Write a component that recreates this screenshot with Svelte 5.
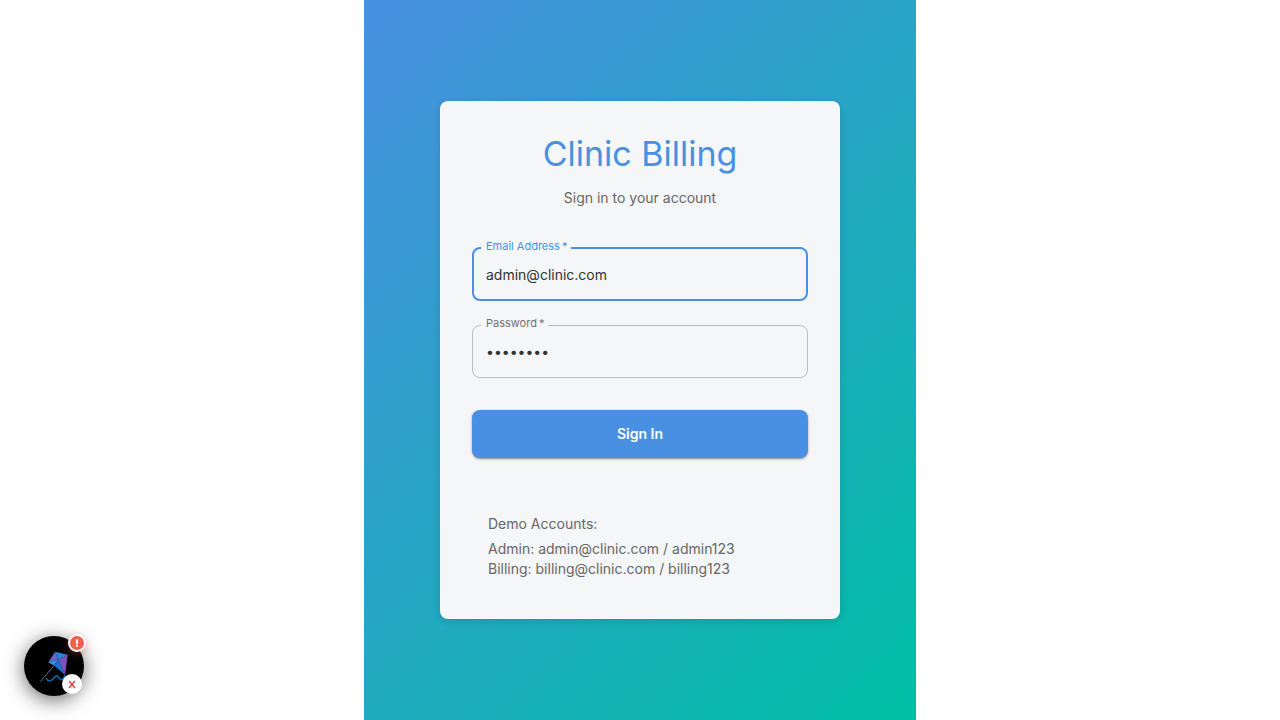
<script>
  let email = $state('admin@clinic.com');
  let password = $state('admin123');
</script>

<main>
  <section class="card">
    <header>
      <h1>Clinic Billing</h1>
      <p>Sign in to your account</p>
    </header>
    <form onsubmit={(e) => e.preventDefault()}>
      <div class="field active">
        <label for="email">Email Address&#8201;*</label>
        <input id="email" type="email" bind:value={email} required />
      </div>
      <div class="field">
        <label for="password">Password&#8201;*</label>
        <input id="password" type="password" bind:value={password} required />
      </div>
      <button class="submit" type="submit">Sign In</button>
    </form>
    <div class="demo">
      <p class="lead">Demo Accounts:</p>
      <p>Admin: admin@clinic.com / admin123<br />Billing: billing@clinic.com / billing123</p>
    </div>
  </section>
</main>

<aside class="widget">
  <button class="launcher" type="button" aria-label="Open assistant">
    <svg viewBox="0 0 60 60" width="60" height="60" aria-hidden="true">
      <defs>
        <linearGradient id="violet" x1="0" y1="0" x2="1" y2="1">
          <stop offset="0" stop-color="#6d5fc4" />
          <stop offset="1" stop-color="#9442b4" />
        </linearGradient>
      </defs>
      <path d="M31 15.700 L43.700 18.700 L34 23.500Z" fill="#2784dc" />
      <path d="M31 15.700 L34 23.500 L24.300 26.500Z" fill="#6568c8" />
      <path d="M43.700 18.700 L41 39 L34 23.500Z" fill="url(#violet)" />
      <path d="M24.300 26.500 L34 23.500 L30 29.500Z" fill="#3b8be0" />
      <path d="M30 29.500 L34 23.500 L41 39Z" fill="#1674d2" />
      <path d="M43.700 18.700 L30 29.500" stroke="#4b55b5" stroke-width=".5" />
      <path d="M30 29.500 L16.500 45.500" stroke="#707070" stroke-width="1" />
      <path d="M22 42 C24 46 27 45 29 43 C32 39 34 39 35 42 C37 45 40 44 41 39" fill="none" stroke="#0966ad" stroke-width="1.600" />
    </svg>
  </button>
  <span class="alert">
    <svg viewBox="0 0 14 14" width="14" height="14" aria-hidden="true">
      <path d="M5.800 3.300 H8.200 L7.800 8.200 H6.200Z" fill="#fff" />
      <circle cx="7" cy="9.900" r="1.100" fill="#fff" />
    </svg>
  </span>
  <button class="close" type="button" aria-label="Close assistant">
    <svg viewBox="0 0 20 20" width="20" height="20" aria-hidden="true">
      <path d="M7.500 7.500 L12.500 13.500 M12.500 7.500 L7.500 13.500" stroke="#e5353d" stroke-width="1.300" stroke-linecap="square" />
    </svg>
  </button>
</aside>

<style>
  :global(body) {
    margin: 0;
    background: #fff;
    font-family: Inter, sans-serif;
  }
  * { box-sizing: border-box; }
  h1, p { margin: 0; }
  main {
    display: flex;
    align-items: center;
    justify-content: center;
    min-height: 100vh;
    max-width: 552px;
    margin: 0 auto;
    padding: 24px;
    background: linear-gradient(135deg, #4a90e2 0%, #00bfa5 100%);
  }
  .card {
    width: 100%;
    max-width: 400px;
    padding: 32px;
    border-radius: 8px;
    background: #f5f6f8;
    box-shadow: 0 2px 8px rgba(0, 0, 0, 0.15);
  }
  header {
    margin-bottom: 39px;
    text-align: center;
  }
  h1 {
    margin-bottom: 13px;
    color: #4a90e2;
    font-size: 34px;
    font-weight: 400;
    line-height: 42px;
  }
  p {
    color: #666;
    font-size: 14px;
    line-height: 20px;
  }
  form {
    display: flex;
    flex-direction: column;
    gap: 24px;
  }
  .field { position: relative; }
  .field label {
    position: absolute;
    top: -9px;
    left: 9px;
    padding: 0 4px 0 5px;
    background: #f5f6f8;
    color: #707172;
    font-size: 11px;
    line-height: 14px;
  }
  .field input {
    display: block;
    width: 100%;
    height: 53px;
    padding: 0 13px;
    border: 1px solid #bbbcbe;
    border-radius: 8px;
    outline: none;
    background: transparent;
    color: #333;
    font: 14px Inter, sans-serif;
  }
  .active label {
    top: -8px;
    color: #4a90e2;
  }
  .active input {
    height: 54px;
    padding: 0 12px;
    border: 2px solid #4a90e2;
  }
  .submit {
    height: 48px;
    margin-top: 8px;
    padding: 0 0 2px;
    border: 0;
    border-radius: 8px;
    background: #4a90e2;
    box-shadow: 0 1px 3px rgba(0, 0, 0, 0.3), 0 1px 1px rgba(0, 0, 0, 0.2);
    color: #fff;
    font: 600 14px Inter, sans-serif;
    cursor: pointer;
  }
  .demo {
    margin-top: 40px;
    padding: 16px 16px 8px;
  }
  .lead { margin-bottom: 5px; }
  .widget {
    position: fixed;
    bottom: 24px;
    left: 24px;
    width: 60px;
    height: 60px;
  }
  .launcher {
    display: block;
    width: 60px;
    height: 60px;
    padding: 0;
    border: 0;
    border-radius: 50%;
    background: #000;
    box-shadow: 0 4px 20px rgba(0, 0, 0, 0.6);
    cursor: pointer;
  }
  .launcher svg, .close svg, .alert svg { display: block; }
  .alert {
    position: absolute;
    top: -2px;
    right: -2px;
    border: 2px solid #fff;
    border-radius: 50%;
    background: #f2604f;
    box-shadow: 0 2px 8px rgba(255, 80, 80, 0.4);
  }
  .close {
    position: absolute;
    right: 2px;
    bottom: 2px;
    width: 20px;
    height: 20px;
    padding: 0;
    border: 0;
    border-radius: 50%;
    background: #fff;
    cursor: pointer;
  }
</style>
